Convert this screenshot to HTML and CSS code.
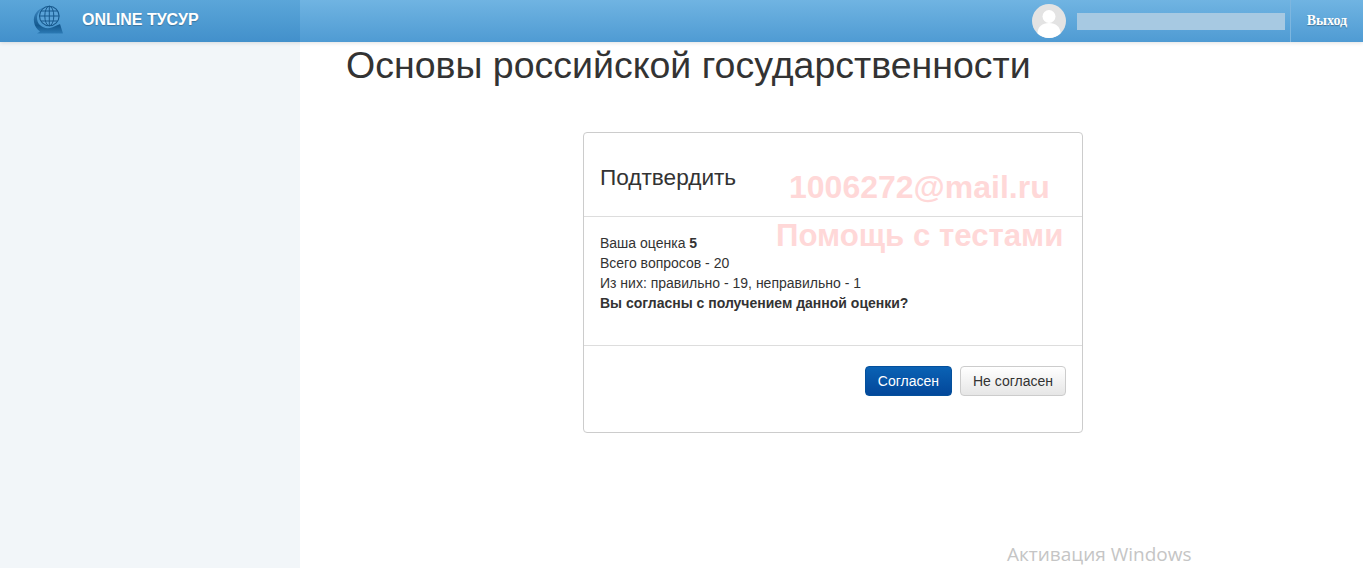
FILE: index.html
```html
<!DOCTYPE html>
<html lang="ru">
<head>
    <meta charset="UTF-8">
    <title>Основы российской государственности</title>
    <link rel="stylesheet" href="styles.css">
</head>
<body>
    <!-- Top Bar -->
    <div class="top-bar">
        <div class="brand">
            <svg class="brand-logo" width="30" height="30" viewBox="0 0 30 30" fill="none">
                <defs>
                    <linearGradient id="logoFill" x1="0" y1="0" x2="0" y2="1">
                        <stop offset="0" stop-color="#3f8ac4"/>
                        <stop offset="0.7" stop-color="#14598f"/>
                        <stop offset="1" stop-color="#2c7ab5"/>
                    </linearGradient>
                </defs>
                <path d="M12 2C4 4 0 10 1 17c.6 4 3 7.500 6 9.500l-3 2h26l-3-9.500-8 3.500C11 25 3.500 20 4 12 4.500 8 8 4 12 2z" fill="url(#logoFill)"/>
                <circle cx="16.300" cy="11" r="9.800" fill="#5aa2d7" stroke="#17598d" stroke-width="1.100"/>
                <ellipse cx="16.300" cy="11" rx="4.500" ry="9.800" stroke="#17598d"/>
                <path d="M16.300 1.200v19.600M6.500 11h19.600M8 6h16.600M8 16h16.600" stroke="#17598d"/>
            </svg>
            <span class="brand-name">ONLINE ТУСУР</span>
        </div>
        <div class="user-box">
            <div class="avatar">
                <svg width="34" height="34" viewBox="0 0 34 34">
                    <circle cx="17" cy="17" r="17" fill="#e3e3e3"/>
                    <circle cx="17" cy="12.500" r="6.500" fill="#fff"/>
                    <path d="M5.500 29.500c0-7 5-10.500 11.500-10.500s11.500 3.500 11.500 10.500A17 17 0 0 1 17 34a17 17 0 0 1-11.500-4.500z" fill="#fff"/>
                </svg>
            </div>
            <div class="user-name"></div>
            <a class="logout" href="#">Выход</a>
        </div>
    </div>

    <div class="page">
        <div class="sidebar"></div>
        <div class="content">
            <h1>Основы российской государственности</h1>
            <div class="card">
                <div class="card-head">
                    <h3>Подтвердить</h3>
                </div>
                <div class="card-body">
                    Ваша оценка <b>5</b><br>
                    Всего вопросов - 20<br>
                    Из них: правильно - 19, неправильно - 1<br>
                    <b>Вы согласны с получением данной оценки?</b>
                </div>
                <div class="card-foot">
                    <button class="btn btn-primary">Согласен</button>
                    <button class="btn btn-default">Не согласен</button>
                </div>
            </div>
        </div>
    </div>

    <!-- Overlays on top of the page -->
    <div class="mark mark-mail">1006272@mail.ru</div>
    <div class="mark mark-help">Помощь с тестами</div>
    <div class="activation">Активация Windows</div>
</body>
</html>
```

FILE: styles.css
```css
/* Basic Reset */
* {
    box-sizing: border-box;
    margin: 0;
    padding: 0;
}

html, body {
    height: 100%;
    overflow: hidden;
}

body {
    font-family: "Liberation Sans", Arial, sans-serif;
    font-size: 14px;
    line-height: 20px;
    color: #333;
    background: #fff;
}

/* Top Bar */
.top-bar {
    display: flex;
    justify-content: space-between;
    height: 42px;
    background: linear-gradient(#70b4e2, #4f9bd3);
    box-shadow: 0 1px 4px rgba(0, 0, 0, 0.12);
    position: relative;
    z-index: 1;
}

.brand {
    width: 300px;
    height: 42px;
    display: flex;
    align-items: center;
    padding: 0 0 3px 33px;
    background: linear-gradient(#5ba6d9, #4290cb);
}

.brand-logo {
    flex: none;
}

.brand-name {
    margin-left: 19px;
    font-size: 16px;
    font-weight: bold;
    color: #fff;
    text-shadow: 0 1px 1px rgba(0, 0, 0, 0.25);
}

.user-box {
    display: flex;
    align-items: center;
}

.avatar {
    width: 34px;
    height: 34px;
    margin-right: 11px;
}

.user-name {
    width: 208px;
    height: 17px;
    margin-right: 5px;
    background: #a7c9e2;
}

.logout {
    width: 73px;
    height: 42px;
    border-left: 1px solid #7db6df;
    line-height: 42px;
    text-align: center;
    font-family: "Liberation Serif", serif;
    font-size: 14px;
    font-weight: bold;
    color: #fff;
    text-decoration: none;
    text-shadow: 0 1px 1px rgba(0, 0, 0, 0.3);
}

/* Page */
.page {
    display: flex;
    height: 526px;
}

.sidebar {
    width: 300px;
    background: #f2f6f9;
}

.content {
    flex: 1;
    padding: 0 43px 0 46px;
}

h1 {
    font-size: 37.5px;
    font-weight: normal;
    line-height: 46px;
    margin-bottom: 44px;
}

/* Card */
.card {
    width: 500px;
    height: 301px;
    margin: 0 auto;
    border: 1px solid #ccc;
    border-radius: 4px;
}

.card-head {
    height: 84px;
    padding: 31px 16px 0;
    border-bottom: 1px solid #ddd;
}

.card-head h3 {
    font-size: 22.6px;
    font-weight: normal;
    line-height: 28px;
}

.card-body {
    height: 129px;
    padding: 16px;
    border-bottom: 1px solid #ddd;
    color: #333;
}

.card-foot {
    display: flex;
    justify-content: flex-end;
    gap: 8px;
    padding: 20px 16px 0;
}

.btn {
    height: 30px;
    padding: 0 12px;
    border-radius: 4px;
    font-family: inherit;
    font-size: 14px;
}

.btn-primary {
    border: 1px solid #04509c;
    background: linear-gradient(#0a62b4, #03479a);
    color: #fff;
}

.btn-default {
    border: 1px solid #ccc;
    background: linear-gradient(#fff, #e6e6e6);
    color: #333;
}

/* Watermarks */
.mark {
    position: absolute;
    font-size: 32px;
    font-weight: bold;
    line-height: 40px;
    color: #ffd8d8;
    white-space: nowrap;
}

.mark-mail {
    left: 789px;
    top: 167px;
}

.mark-help {
    left: 776px;
    top: 216px;
    font-size: 31.2px;
}

.activation {
    position: absolute;
    left: 1007px;
    top: 541px;
    font-family: "Open Sans", sans-serif;
    font-size: 19px;
    line-height: 26px;
    color: #c5c5c5;
}
```
